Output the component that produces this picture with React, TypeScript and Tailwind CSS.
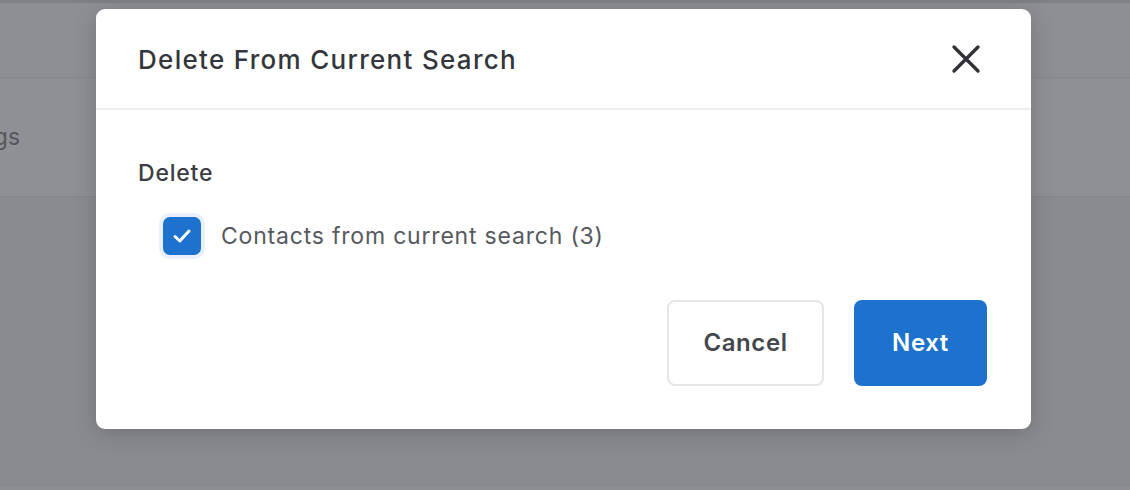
import React from "react";

export default function App() {
  return (
    <div
      className="relative w-[1130px] h-[490px] overflow-hidden bg-[#8e8f94]"
      style={{ fontFamily: "Inter, 'Noto Sans', sans-serif" }}
    >
      {/* dimmed background page */}
      <div className="flex flex-col h-full">
        <div className="h-[3px] bg-[#7f8085]" />
        <div className="h-[75px] border-b border-[#85868b]" />
        <div className="h-[119px] flex items-center border-b border-[#86878c] bg-[#8f9095]">
          <span className="ml-[-68px] text-[23px] text-[#55575d]">Settings</span>
        </div>
        <div className="flex-1 bg-[#8a8b90] border-b border-[#86878c]" />
        <div className="h-[4px] bg-[#8d8e93]" />
      </div>

      {/* modal */}
      <div className="absolute left-[96px] top-[9px] w-[935px] h-[420px] bg-white rounded-[9px] shadow-[0_4px_24px_rgba(0,0,0,0.18)] flex flex-col">
        <div className="h-[101px] flex items-center justify-between pl-[42px] pr-[50px] border-b-2 border-[#eeeeee]">
          <h1 className="text-[26px] font-medium text-[#33363b] tracking-[1.3px] pt-[2px]">
            Delete From Current Search
          </h1>
          <svg width="30" height="30" viewBox="0 0 30 30" className="text-[#2f3237]">
            <path d="M3 3 L27 27 M27 3 L3 27" stroke="currentColor" strokeWidth="3.4" strokeLinecap="round" />
          </svg>
        </div>
        <div className="flex flex-col pl-[42px] pr-[44px] pt-[48px]">
          <div className="text-[23px] font-medium text-[#3a3d42] leading-[30px] tracking-[0.8px]">Delete</div>
          <div className="flex items-center mt-[29px] ml-[25px]">
            <div className="w-[38px] h-[38px] rounded-[7px] bg-[#1c72cd] ring-4 ring-[#e8f0fb] flex items-center justify-center">
              <svg width="26" height="26" viewBox="0 0 26 26">
                <path d="M6 13.5 L10.8 18 L20 8" fill="none" stroke="white" strokeWidth="3" strokeLinecap="round" strokeLinejoin="round" />
              </svg>
            </div>
            <span className="ml-[20px] text-[23px] text-[#56595e] tracking-[0.8px]">Contacts from current search (3)</span>
          </div>
          <div className="flex justify-end gap-[30px] mt-[45px]">
            <button className="w-[157px] h-[86px] rounded-[8px] border-2 border-[#e6e6e6] bg-white text-[24px] font-semibold text-[#44474c] tracking-[0.6px]">
              Cancel
            </button>
            <button className="w-[133px] h-[86px] rounded-[8px] bg-[#1c72cd] text-[24px] font-semibold text-white tracking-[0.6px]">
              Next
            </button>
          </div>
        </div>
      </div>
    </div>
  );
}
